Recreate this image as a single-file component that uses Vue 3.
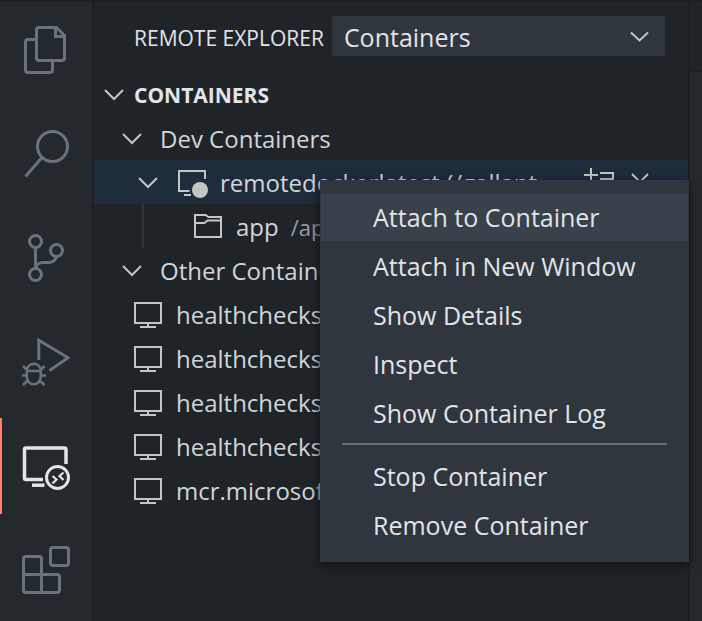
<script setup>
import { ref } from 'vue'

const activities = [
  { id: 'files', label: 'Explorer' },
  { id: 'search', label: 'Search' },
  { id: 'scm', label: 'Source Control' },
  { id: 'debug', label: 'Run and Debug' },
  { id: 'remote', label: 'Remote Explorer' },
  { id: 'extensions', label: 'Extensions' },
]
const active = ref('remote')
const target = ref('Containers')

const others = [
  'healthchecks_web',
  'healthchecks_db',
  'healthchecks_mail',
  'healthchecks_worker',
  'mcr.microsoft.com',
]

const menuGroups = [
  ['Attach to Container', 'Attach in New Window', 'Show Details', 'Inspect', 'Show Container Log'],
  ['Stop Container', 'Remove Container'],
]
const focused = ref('Attach to Container')
</script>

<template>
  <div class="workbench">
    <nav class="activity-bar" aria-label="Views">
      <button
        v-for="item in activities"
        :key="item.id"
        class="activity"
        :class="{ active: active === item.id }"
        :aria-label="item.label"
        @click="active = item.id"
      >
        <svg class="activity-icon" viewBox="0 0 48 48" aria-hidden="true">
          <g v-if="item.id === 'files'">
            <path d="M17 1.5h17.500l8 8V32a2.500 2.500 0 0 1-2.500 2.500H17a2.500 2.500 0 0 1-2.500-2.500V4A2.500 2.500 0 0 1 17 1.500z" />
            <path d="M33.500 2v8.500H42" />
            <path d="M14 13.500H6A2.500 2.500 0 0 0 3.500 16v28A2.500 2.500 0 0 0 6 46.500h22a2.500 2.500 0 0 0 2.500-2.500v-9" />
          </g>
          <g v-else-if="item.id === 'search'">
            <circle cx="30.500" cy="16.500" r="15" />
            <path d="M20 27.500L3.500 46.500" />
          </g>
          <g v-else-if="item.id === 'scm'">
            <circle cx="13.500" cy="7.500" r="6" />
            <circle cx="34.500" cy="16.500" r="6" />
            <circle cx="13.500" cy="40.500" r="6" />
            <path d="M13.500 14v20M34.500 23c-1.500 3.800-3.500 5.500-7.500 5.500h-6c-4 0-6.500 2-7.500 5.500" />
          </g>
          <g v-else-if="item.id === 'debug'">
            <path d="M16.800 22V2.200L46 19.800L27.500 32.500" />
            <path d="M4.800 33v5.500a7 7.800 0 0 0 14 0V33c0-9.500-14-9.500-14 0zM4.800 33h14M0 37.500h4.500M19 37.500h5M1 28l4 4M22.500 28l-4 4M1 47l4.500-4.500M22.500 47L18 42.500" stroke-width="2.600" />
          </g>
          <g v-else-if="item.id === 'remote'">
            <path d="M44 22V7.500A1.500 1.500 0 0 0 42.500 6H4a1.500 1.500 0 0 0-1.500 1.500V36A1.500 1.500 0 0 0 4 37.500h17" stroke-width="3.500" />
            <path d="M10 43.200h12.500" stroke-width="3.500" />
            <circle cx="35.500" cy="35.500" r="11" />
            <path d="M30.500 34l4 3.500l-4 4M41.500 30.500l-4 3.500l4 4" stroke-width="2.200" />
          </g>
          <g v-else>
            <path d="M4 10.500h13a2.500 2.500 0 0 1 2.500 2.500v15.500H35a2.500 2.500 0 0 1 2.500 2.500v13a2.500 2.500 0 0 1-2.500 2.500H4A2.500 2.500 0 0 1 1.500 44V13A2.500 2.500 0 0 1 4 10.500zM1.500 28.500h18v18" />
            <rect x="28.500" y="1.500" width="18" height="18" rx="2.500" />
          </g>
        </svg>
      </button>
    </nav>

    <aside class="sidebar">
      <header class="view-header">
        <label class="view-title" for="remote-target">REMOTE EXPLORER</label>
        <div class="select-box">
          <select id="remote-target" v-model="target">
            <option>Containers</option>
            <option>SSH Targets</option>
          </select>
          <svg class="chevron" viewBox="0 0 20 12" aria-hidden="true"><path d="M2 2.500l8.500 8l8.500-8" /></svg>
        </div>
      </header>

      <h2 class="section">
        <svg class="chevron" viewBox="0 0 20 12" aria-hidden="true"><path d="M1 2l9 9l9-9" /></svg>
        <span class="section-name">CONTAINERS</span>
      </h2>

      <ul class="tree">
        <li class="row group">
          <svg class="chevron" viewBox="0 0 20 12" aria-hidden="true"><path d="M1 2l9 9l9-9" /></svg>
          <span class="name">Dev Containers</span>
        </li>
        <li class="row container selected">
          <svg class="chevron" viewBox="0 0 20 12" aria-hidden="true"><path d="M1 2l9 9l9-9" /></svg>
          <svg class="item-icon" viewBox="0 0 32 32" aria-hidden="true">
            <path d="M29 13V5H3v20h10.500M8 29h7" />
            <circle class="dot" cx="24" cy="24" r="8" />
          </svg>
          <span class="name">remotedockerlatest (/gallant</span>
          <span class="actions">
            <button class="action" aria-label="Open Folder in Container">
              <svg viewBox="0 0 32 32" aria-hidden="true"><path d="M9 2v14M2 9h14M18 7h13v19H9V17M18 13h13" /></svg>
            </button>
            <button class="action" aria-label="Remove">
              <svg viewBox="0 0 32 32" aria-hidden="true"><path d="M8 8l16 16M24 8L8 24" /></svg>
            </button>
          </span>
        </li>
        <li class="row folder">
          <svg class="item-icon" viewBox="0 0 32 32" aria-hidden="true">
            <path d="M3 5h10.500l3 2H29v20H3zM3 13h9.500l3-2.500H29" />
          </svg>
          <span class="name">app</span>
          <span class="path">/app</span>
        </li>
        <li class="row group">
          <svg class="chevron" viewBox="0 0 20 12" aria-hidden="true"><path d="M1 2l9 9l9-9" /></svg>
          <span class="name">Other Containers</span>
        </li>
        <li v-for="name in others" :key="name" class="row other">
          <svg class="item-icon" viewBox="0 0 32 32" aria-hidden="true">
            <path d="M3 5h26v20H3zM16 25v4M8 29h16" />
          </svg>
          <span class="name">{{ name }}</span>
        </li>
      </ul>
    </aside>

    <main class="editor">
      <div class="tabs"></div>
    </main>

    <div class="menu" role="menu">
      <template v-for="(group, index) in menuGroups" :key="index">
        <hr v-if="index > 0" class="separator" />
        <button
          v-for="entry in group"
          :key="entry"
          class="menu-item"
          :class="{ focused: focused === entry }"
          role="menuitem"
          @mouseenter="focused = entry"
        >
          {{ entry }}
        </button>
      </template>
    </div>
  </div>
</template>

<style>
body {
  background: #1f2428;
}
</style>

<style scoped>
.workbench {
  position: relative;
  display: grid;
  grid-template-columns: 94px minmax(0, 1fr) 12px;
  box-sizing: border-box;
  min-height: 100vh;
  border-top: 2px solid #1b1f23;
  background: #1f2428;
  color: #d1d5da;
  font-family: "Open Sans", "Noto Sans", sans-serif;
  font-size: 25px;
  line-height: 42px;
  overflow: hidden;
}

button,
select {
  margin: 0;
  padding: 0;
  border: 0;
  border-radius: 0;
  background: none;
  color: inherit;
  font: inherit;
}

svg {
  display: block;
  flex: none;
  fill: none;
  stroke: currentColor;
  stroke-width: 2;
}

.activity-bar {
  display: flex;
  flex-direction: column;
  gap: 8px;
  border-right: 2px solid #1b1f23;
  background: #24292e;
}

.activity {
  display: flex;
  align-items: center;
  justify-content: center;
  height: 96px;
  color: #6a737d;
}

.activity.active {
  color: #e1e4e8;
  box-shadow: inset 2px 0 #f9826c;
}

.activity-icon {
  width: 48px;
  height: 48px;
  stroke-width: 3;
}

.sidebar {
  border-right: 2px solid #1b1f23;
}

.view-header {
  display: flex;
  align-items: center;
  gap: 8px;
  height: 68px;
  margin-bottom: 2px;
  padding: 0 23px 0 40px;
  color: #e1e4e8;
}

.view-title {
  padding-top: 4px;
  font-size: 21px;
  white-space: nowrap;
}

.select-box {
  display: grid;
  flex: 1;
  align-items: center;
  background: #2f363d;
}

.select-box > * {
  grid-area: 1 / 1;
}

.select-box select {
  width: 100%;
  height: 40px;
  padding-left: 12px;
  appearance: none;
  outline: none;
}

.select-box .chevron {
  justify-self: end;
  margin-right: 16px;
  pointer-events: none;
}

.chevron {
  width: 20px;
  height: 12px;
  overflow: visible;
  color: #c5c5c5;
}

.section {
  display: flex;
  align-items: center;
  gap: 10px;
  height: 44px;
  margin: 0;
  padding-left: 10px;
  color: #e1e4e8;
  font-size: 21px;
  font-weight: 700;
}

.tree {
  margin: 0;
  padding: 0;
  font-size: 24px;
  list-style: none;
}

.row {
  display: flex;
  align-items: center;
  height: 44px;
  white-space: nowrap;
}

.section-name,
.name,
.path {
  padding-top: 2px;
}

.group {
  gap: 18px;
  padding-left: 28px;
}

.container {
  gap: 12px;
  padding-left: 44px;
}

.container .item-icon {
  margin-left: 6px;
}

.selected {
  background: #1e2c3c;
}

.item-icon {
  width: 32px;
  height: 32px;
  color: #c5c5c5;
}

.dot {
  fill: currentColor;
  stroke: none;
}

.actions {
  display: flex;
  gap: 10px;
  margin-left: auto;
  padding-right: 32px;
}

.action {
  width: 32px;
  height: 32px;
  color: #c5c5c5;
}

.folder {
  gap: 12px;
  margin-left: 48px;
  padding-left: 48px;
  border-left: 2px solid #2f363d;
}

.path {
  color: #959da5;
  font-size: 22px;
}

.other {
  gap: 12px;
  padding-left: 38px;
}

.editor {
  background: #24292e;
}

.tabs {
  height: 68px;
  border-bottom: 2px solid #1b1f23;
  background: #1f2428;
}

.menu {
  position: absolute;
  top: 178px;
  left: 320px;
  display: flex;
  flex-direction: column;
  gap: 2px;
  box-sizing: border-box;
  width: 369px;
  padding: 14px 1px 13px;
  background: #2f363d;
  box-shadow: 0 4px 10px #0f1215;
  color: #e1e4e8;
}

.menu-item {
  height: 47px;
  padding: 0 0 2px 52px;
  text-align: left;
}

.menu-item.focused {
  background: #39414a;
}

.separator {
  width: auto;
  height: 2px;
  margin: 4px 21px 6px;
  border: 0;
  background: #6b6b70;
}
</style>
